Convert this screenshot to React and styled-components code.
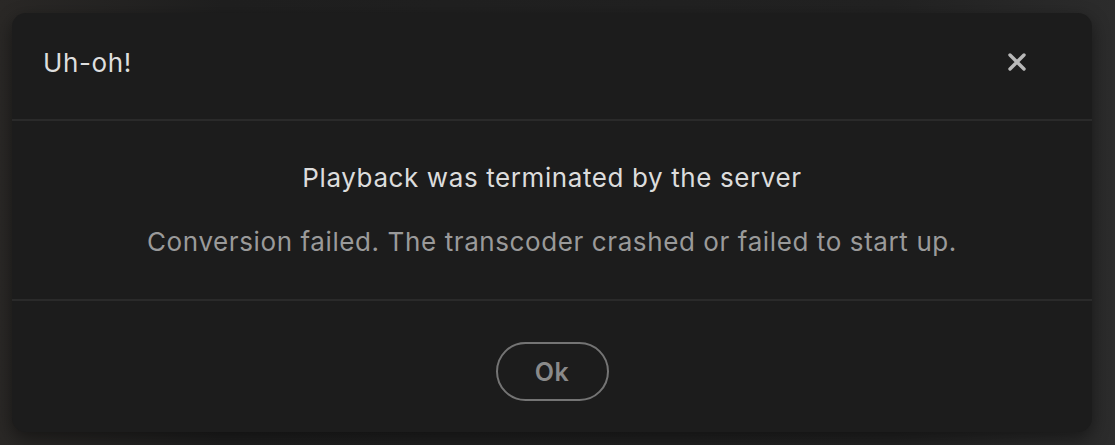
import React from 'react';
import styled, { createGlobalStyle } from 'styled-components';

const GlobalStyle = createGlobalStyle`
  html, body {
    margin: 0;
    padding: 0;
    background: #242424;
    font-family: Inter, "Open Sans", "Liberation Sans", sans-serif;
  }
`;

// Backdrop behind the dialog
const Backdrop = styled.div`
  width: 1115px;
  height: 445px;
  box-sizing: border-box;
  padding: 13px 23px 13px 12px;
  background: linear-gradient(90deg, #2a2826 0%, #1f1f1f 20%, #222 80%, #2c2c2c 100%);
`;

const Dialog = styled.div`
  width: 1080px;
  height: 419px;
  background: #1c1c1c;
  border-radius: 14px;
  box-shadow: 0 6px 18px rgba(0, 0, 0, 0.45);
  display: flex;
  flex-direction: column;
  overflow: hidden;
`;

const Header = styled.div`
  height: 108px;
  box-sizing: border-box;
  display: flex;
  align-items: center;
  justify-content: space-between;
  padding: 0 56px 8px 31px;
  border-bottom: 2px solid #2a2a2a;
`;

const Title = styled.h2`
  margin: 0;
  font-size: 26px;
  letter-spacing: 0.6px;
  font-weight: 400;
  color: #dedede;
`;

const CloseButton = styled.button`
  width: 38px;
  height: 38px;
  padding: 0;
  background: none;
  border: none;
  display: flex;
  align-items: center;
  justify-content: center;
  cursor: pointer;
`;

const Body = styled.div`
  flex: 0 0 auto;
  padding: 41px 20px;
  display: flex;
  flex-direction: column;
  align-items: center;
  gap: 32px;
  border-bottom: 2px solid #2a2a2a;
`;

const Message = styled.p`
  margin: 0;
  font-size: 26px;
  letter-spacing: 0.6px;
  line-height: 32px;
  color: ${(p) => (p.muted ? '#9a9a9a' : '#dcdcdc')};
`;

const Footer = styled.div`
  flex: 1;
  display: flex;
  justify-content: center;
  align-items: flex-start;
  padding-top: 41px;
`;

const OkButton = styled.button`
  width: 113px;
  height: 59px;
  border-radius: 30px;
  border: 2px solid #747474;
  background: transparent;
  color: #8a8a8a;
  font-family: inherit;
  font-size: 25px;
  letter-spacing: 0.5px;
  font-weight: 600;
  cursor: pointer;
`;

const CloseIcon = () => (
  <svg width="20" height="20" viewBox="0 0 20 20">
    <path d="M3 3 L17 17 M17 3 L3 17" stroke="#b8b8b8" strokeWidth="3.4" strokeLinecap="round" />
  </svg>
);

const App = () => {
  return (
    <Backdrop>
      <GlobalStyle />
      <Dialog>
        <Header>
          <Title>Uh-oh!</Title>
          <CloseButton aria-label="Close">
            <CloseIcon />
          </CloseButton>
        </Header>
        <Body>
          <Message>Playback was terminated by the server</Message>
          <Message muted>Conversion failed. The transcoder crashed or failed to start up.</Message>
        </Body>
        <Footer>
          <OkButton>Ok</OkButton>
        </Footer>
      </Dialog>
    </Backdrop>
  );
};

export default App;
